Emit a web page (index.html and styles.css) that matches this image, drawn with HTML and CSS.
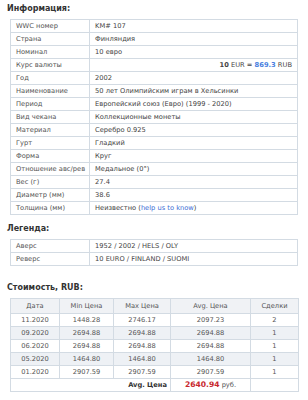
FILE: index.html
```html
<!DOCTYPE html>
<html>
<head>
<meta charset="utf-8">
<link rel="stylesheet" href="styles.css">
</head>
<body>
<div class="page">
  <h3 class="title first">Информация:</h3>
  <table class="info">
    <colgroup><col class="c-label"><col></colgroup>
    <tr><td>WWC номер</td><td>KM# 107</td></tr>
    <tr><td>Страна</td><td>Финляндия</td></tr>
    <tr><td>Номинал</td><td>10 евро</td></tr>
    <tr><td>Курс валюты</td><td class="right"><b>10</b> EUR <b>=</b> <b class="blue">869.3</b> RUB</td></tr>
    <tr><td>Год</td><td>2002</td></tr>
    <tr><td>Наименование</td><td>50 лет Олимпийским играм в Хельсинки</td></tr>
    <tr><td>Период</td><td>Европейский союз (Евро) (1999 - 2020)</td></tr>
    <tr><td>Вид чекана</td><td>Коллекционные монеты</td></tr>
    <tr><td>Материал</td><td>Серебро 0.925</td></tr>
    <tr><td>Гурт</td><td>Гладкий</td></tr>
    <tr><td>Форма</td><td>Круг</td></tr>
    <tr><td>Отношение авс/рев</td><td>Медальное (0°)</td></tr>
    <tr><td>Вес (г)</td><td>27.4</td></tr>
    <tr><td>Диаметр (мм)</td><td>38.6</td></tr>
    <tr><td>Толщина (мм)</td><td>Неизвестно (<a class="link" href="#">help us to know</a>)</td></tr>
  </table>

  <h3 class="title">Легенда:</h3>
  <table class="info">
    <colgroup><col class="c-label"><col></colgroup>
    <tr><td>Аверс</td><td>1952 / 2002 / HELS / OLY</td></tr>
    <tr><td>Реверс</td><td>10 EURO / FINLAND / SUOMI</td></tr>
  </table>

  <h3 class="title price-title">Стоимость, RUB:</h3>
  <table class="price">
    <colgroup><col class="p1"><col class="p2"><col class="p3"><col class="p4"><col class="p5"></colgroup>
    <tr class="head"><th>Дата</th><th>Min Цена</th><th>Max Цена</th><th>Avg. Цена</th><th>Сделки</th></tr>
    <tr><td>11.2020</td><td>1448.28</td><td>2746.17</td><td>2097.23</td><td>2</td></tr>
    <tr class="alt"><td>09.2020</td><td>2694.88</td><td>2694.88</td><td>2694.88</td><td>1</td></tr>
    <tr><td>06.2020</td><td>2694.88</td><td>2694.88</td><td>2694.88</td><td>1</td></tr>
    <tr class="alt"><td>05.2020</td><td>1464.80</td><td>1464.80</td><td>1464.80</td><td>1</td></tr>
    <tr><td>01.2020</td><td>2907.59</td><td>2907.59</td><td>2907.59</td><td>1</td></tr>
    <tr class="avg"><td colspan="3" class="avg-label">Avg. Цена</td><td><b class="red">2640.94</b> руб.</td><td></td></tr>
  </table>
</div>
</body>
</html>
```

FILE: styles.css
```css
html, body {
  margin: 0;
  padding: 0;
  background: #ffffff;
}

body {
  font-family: "DejaVu Sans", Verdana, sans-serif;
  font-size: 6.7px;
  color: #444444;
}

.page {
  padding: 0 10px 0 10px;
}

.title {
  margin: 9px 0 5px -3px;
  font-size: 8px;
  line-height: 10px;
  font-weight: bold;
  color: #333333;
}

.title.first {
  margin-top: 4px;
}

.title.price-title {
  margin-top: 17px;
}

table {
  border-collapse: collapse;
  table-layout: fixed;
  width: 288px;
}

td, th {
  border: 1px solid #d3dbe3;
  height: 12px;
  line-height: 12px;
  padding: 0 0 0 5px;
  white-space: nowrap;
  overflow: hidden;
}

.c-label {
  width: 79px;
}

.info td:first-child {
  color: #555555;
}

.right {
  text-align: right;
  padding-right: 5px;
}

.blue {
  color: #4a7fe0;
}

.link {
  color: #3d6fd6;
  text-decoration: none;
}

.price td, .price th {
  text-align: center;
  padding: 0;
  color: #555555;
}

.price th {
  font-weight: normal;
  height: 14px;
  line-height: 14px;
  background: #f0f2f5;
}

.price .alt td {
  background: #eef1f5;
}

.p1 { width: 49px; }
.p2 { width: 54px; }
.p3 { width: 57px; }
.p4 { width: 80px; }
.p5 { width: 48px; }

.price .avg-label {
  text-align: right;
  padding-right: 3px;
  font-weight: bold;
  color: #333333;
}

.red {
  color: #c8282e;
  font-size: 7.6px;
}
```
